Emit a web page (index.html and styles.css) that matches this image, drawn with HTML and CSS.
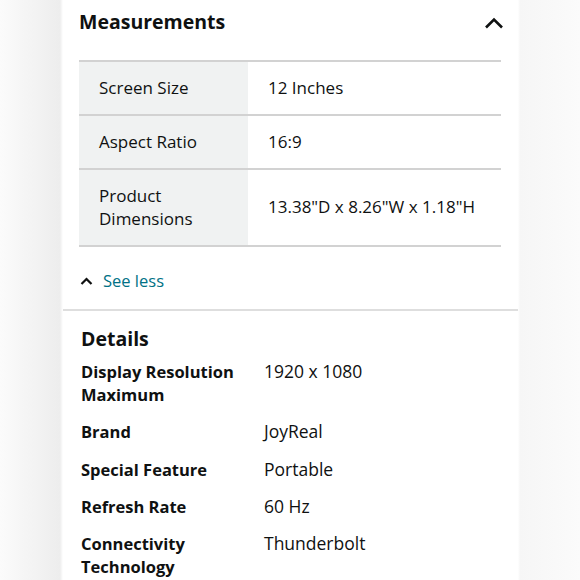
FILE: index.html
```html
<!DOCTYPE html>
<html>
<head>
<meta charset="utf-8">
<link rel="stylesheet" href="styles.css">
</head>
<body>
<div class="page">
  <section class="measure">
    <div class="measure-head">
      <h2 class="title">Measurements</h2>
      <svg class="chev" width="20" height="12" viewBox="0 0 20 12"><path d="M2 10.5 L10 2.5 L18 10.5" fill="none" stroke="#0f1111" stroke-width="2.6"/></svg>
    </div>
    <div class="table">
      <div class="row r1"><div class="lab">Screen Size</div><div class="val">12 Inches</div></div>
      <div class="row r2"><div class="lab">Aspect Ratio</div><div class="val">16:9</div></div>
      <div class="row r3"><div class="lab">Product<br>Dimensions</div><div class="val">13.38"D x 8.26"W x 1.18"H</div></div>
    </div>
    <div class="seeless">
      <svg width="13" height="8" viewBox="0 0 13 8"><path d="M1.5 7 L6.5 2 L11.5 7" fill="none" stroke="#0f1111" stroke-width="2.2"/></svg>
      <span class="link">See less</span>
    </div>
  </section>
  <section class="details">
    <h2 class="title">Details</h2>
    <div class="dgrid">
      <div class="dl">Display Resolution Maximum</div><div class="dv">1920 x 1080</div>
      <div class="dl">Brand</div><div class="dv">JoyReal</div>
      <div class="dl">Special Feature</div><div class="dv">Portable</div>
      <div class="dl">Refresh Rate</div><div class="dv">60 Hz</div>
      <div class="dl">Connectivity Technology</div><div class="dv">Thunderbolt</div>
    </div>
  </section>
</div>
</body>
</html>
```

FILE: styles.css
```css
html, body {
  margin: 0;
  padding: 0;
}
body {
  width: 580px;
  height: 580px;
  overflow: hidden;
  background: linear-gradient(to right, #fbfbfb 0px, #ededed 60px, #ffffff 63px, #ffffff 518px, #f6f6f6 520px, #fbfbfb 580px);
  font-family: "Open Sans", "Noto Sans", sans-serif;
  color: #0f1111;
}
.page {
  margin-left: 63px;
  width: 455px;
  height: 580px;
  background: #fff;
}
.measure {
  padding: 0 17px 0 16px;
  border-bottom: 2px solid #dedede;
}
.measure-head {
  height: 60px;
  display: flex;
  justify-content: space-between;
  align-items: flex-start;
}
.title {
  margin: 0;
  font-size: 19.5px;
  font-weight: 700;
  line-height: 28px;
}
.measure-head .title {
  padding-top: 8px;
}
.chev {
  margin-top: 17px;
  margin-right: -3px;
}
.table {
  border-top: 2px solid #d2d2d2;
  font-size: 17px;
}
.row {
  display: flex;
  border-bottom: 2px solid #d2d2d2;
}
.r1, .r2 { height: 52px; }
.r3 { height: 75px; }
.lab {
  width: 149px;
  background: #f0f2f2;
  padding-left: 20px;
  display: flex;
  align-items: center;
  line-height: 23px;
  padding-bottom: 2px;
}
.val {
  padding-left: 20px;
  display: flex;
  align-items: center;
  padding-bottom: 2px;
}
.seeless {
  height: 62px;
  display: flex;
  align-items: center;
  gap: 10px;
  padding-left: 1px;
  padding-top: 5px;
  box-sizing: border-box;
  font-size: 16.5px;
}
.link {
  color: #007185;
}
.details {
  padding: 14px 17px 0 18px;
}
.dgrid {
  margin-top: 7px;
  display: grid;
  grid-template-columns: 183px 1fr;
  row-gap: 14.3px;
  font-size: 16.5px;
  line-height: 23px;
}
.dl {
  font-weight: 700;
  width: 170px;
}
.dv {
  font-size: 17.5px;
}
```
